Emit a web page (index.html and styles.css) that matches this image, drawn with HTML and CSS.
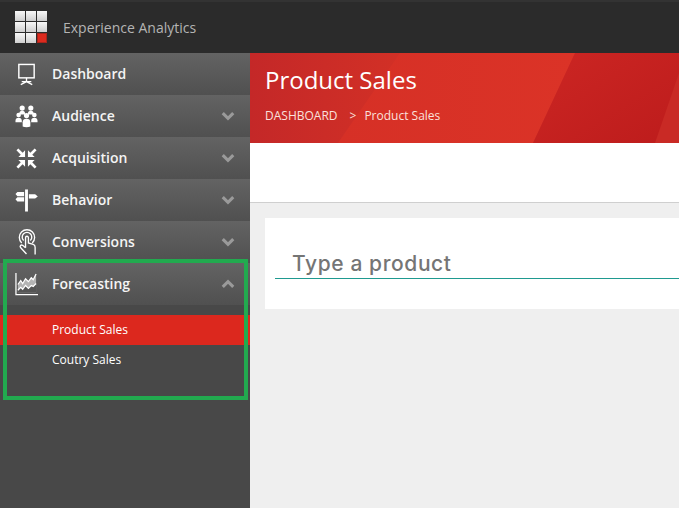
FILE: index.html
```html
<!DOCTYPE html>
<html>
<head>
    <title>Experience Analytics</title>
    <link rel="stylesheet" href="styles.css">
</head>
<body>
    <header class="topbar">
        <div class="logo">
            <span></span><span></span><span></span>
            <span></span><span></span><span></span>
            <span></span><span></span><span class="logo-red"></span>
        </div>
        <div class="app-name">Experience Analytics</div>
    </header>

    <div class="layout">
        <nav class="sidebar">
            <a class="menu-item">
                <svg class="menu-icon" viewBox="0 0 24 24">
                    <rect x="4" y="1.500" width="16" height="14" fill="none" stroke="#fff" stroke-width="1.500"/>
                    <path d="M12 15.500v4M12 19.500l-6 3M12 19.500l6 3M7 19.500h10" fill="none" stroke="#fff" stroke-width="1.400"/>
                </svg>
                <span class="menu-label">Dashboard</span>
            </a>
            <a class="menu-item">
                <svg class="menu-icon" viewBox="0 0 24 24" fill="#fff">
                    <circle cx="7.500" cy="3.200" r="2.700"/><circle cx="16.500" cy="3.200" r="2.700"/>
                    <path d="M4.500 9c0-2 1-3 3-3s3 1 3 3v1h-6zM13.500 9c0-2 1-3 3-3s3 1 3 3v1h-6z"/>
                    <circle cx="3.800" cy="10.500" r="2.400"/><circle cx="20.200" cy="10.500" r="2.400"/><circle cx="12" cy="11" r="2.700"/>
                    <path d="M0.500 16.500c0-2 1.200-3.200 3.300-3.200s3.300 1.200 3.300 3.200v1.500H0.500zM16.900 16.500c0-2 1.200-3.200 3.300-3.200s3.300 1.200 3.300 3.200v1.500h-6.600z"/>
                    <path d="M8 18c0-2.500 1.500-3.700 4-3.700s4 1.200 4 3.700v4.500c-2 1-6 1-8 0z"/>
                </svg>
                <span class="menu-label">Audience</span>
                <svg class="chevron" viewBox="0 0 12 8"><path d="M1.500 1.500 6 6l4.500-4.500" fill="none" stroke="#9a9a9a" stroke-width="2.600"/></svg>
            </a>
            <a class="menu-item">
                <svg class="menu-icon" viewBox="0 0 24 24" fill="#fff">
                    <path d="M3.500 1.500 1.500 3.500l4.500 4.500-2.500 2.500h7v-7L8 6z"/>
                    <path d="M20.500 1.500l2 2-4.500 4.500 2.500 2.500h-7v-7L16 6z"/>
                    <path d="M3.500 22.500l-2-2L6 16l-2.500-2.500h7v7L8 18z"/>
                    <path d="M20.500 22.500l2-2L18 16l2.500-2.500h-7v7L16 18z"/>
                </svg>
                <span class="menu-label">Acquisition</span>
                <svg class="chevron" viewBox="0 0 12 8"><path d="M1.500 1.500 6 6l4.500-4.500" fill="none" stroke="#9a9a9a" stroke-width="2.600"/></svg>
            </a>
            <a class="menu-item">
                <svg class="menu-icon" viewBox="0 0 24 24" fill="#fff">
                    <path d="M10.500 0.500h3v23h-3z"/>
                    <path d="M2.500 3H9.500v4.500H2.500L0.500 5.200zM2.500 8.500H9.500v4.500H2.500L0.500 10.700zM14.500 5.500H21l2.800 2.300-2.800 2.200h-6.500z"/>
                </svg>
                <span class="menu-label">Behavior</span>
                <svg class="chevron" viewBox="0 0 12 8"><path d="M1.500 1.500 6 6l4.500-4.500" fill="none" stroke="#9a9a9a" stroke-width="2.600"/></svg>
            </a>
            <a class="menu-item">
                <svg class="menu-icon icon-tall" viewBox="0 0 24 28" fill="none" stroke="#fff" stroke-width="1.400">
                    <path d="M7 15a8 8 0 1 1 11 0"/>
                    <path d="M9 12.500a5 5 0 1 1 7 0"/>
                    <path d="M11 20V9.500a1.500 1.500 0 0 1 3 0V15l5 1.500c1.500.5 2 1.500 2 3V27"/>
                    <path d="M11 20l-3-2.500c-2-1-3.500 1-2 2.500l6 6.500"/>
                </svg>
                <span class="menu-label">Conversions</span>
                <svg class="chevron" viewBox="0 0 12 8"><path d="M1.500 1.500 6 6l4.500-4.500" fill="none" stroke="#9a9a9a" stroke-width="2.600"/></svg>
            </a>
            <a class="menu-item">
                <svg class="menu-icon" viewBox="0 0 24 24">
                    <path d="M1 0v22.500h23" fill="none" stroke="#fff" stroke-width="1.300"/>
                    <path d="M3 12l3-4 2 3 3-5 3 3 3-4 2 2 3-6v19H3z" fill="#fff" fill-opacity=".55"/>
                    <path d="M3 18l3-3 2 2 3-4 3 3 3-3 2 1 3-3v9H3z" fill="#555"/>
                    <path d="M3 12l3-4 2 3 3-5 3 3 3-4 2 2 3-6M3 18l3-3 2 2 3-4 3 3 3-3 2 1 3-3" fill="none" stroke="#fff" stroke-width="1.300"/>
                </svg>
                <span class="menu-label">Forecasting</span>
                <svg class="chevron" viewBox="0 0 12 8"><path d="M1.500 6.500 6 2l4.500 4.500" fill="none" stroke="#9a9a9a" stroke-width="2.600"/></svg>
            </a>
            <div class="submenu">
                <a class="submenu-item active">Product Sales</a>
                <a class="submenu-item">Coutry Sales</a>
            </div>
            <div class="highlight-box"></div>
        </nav>

        <main class="content">
            <section class="page-header">
                <svg class="header-shapes" viewBox="0 0 429 90" preserveAspectRatio="none">
                    <defs>
                        <linearGradient id="midFill" x1="0" y1="0" x2="1" y2="0">
                            <stop offset="0" stop-color="#d63026"/>
                            <stop offset="1" stop-color="#db3327"/>
                        </linearGradient>
                        <linearGradient id="rightFill" x1="0" y1="0" x2="1" y2="1">
                            <stop offset="0" stop-color="#cc2623"/>
                            <stop offset="1" stop-color="#bd1c1c"/>
                        </linearGradient>
                    </defs>
                    <polygon points="150,0 325,0 283,90 88,90" fill="url(#midFill)"/>
                    <polygon points="325,0 429,0 429,90 283,90" fill="url(#rightFill)"/>
                    <polygon points="429,20 429,90 405,90" fill="#c92a25"/>
                </svg>
                <h1 class="page-title">Product Sales</h1>
                <div class="breadcrumb">
                    <span>DASHBOARD</span>
                    <span class="breadcrumb-sep">&gt;</span>
                    <span>Product Sales</span>
                </div>
            </section>
            <div class="toolbar"></div>
            <section class="work-area">
                <div class="card">
                    <div class="product-input">Type a product</div>
                </div>
            </section>
        </main>
    </div>
</body>
</html>
```

FILE: styles.css
```css
* {
    box-sizing: border-box;
}

html,
body {
    height: 100%;
}

body {
    margin: 0;
    overflow: hidden;
    font-family: 'Open Sans', sans-serif;
    background-color: #efefef;
    display: flex;
    flex-direction: column;
}

.topbar {
    height: 53px;
    flex-shrink: 0;
    display: flex;
    align-items: center;
    padding-left: 15px;
    background-color: #2b2b2b;
    border-top: 2px solid #333;
}

.logo {
    display: grid;
    grid-template-columns: repeat(3, 10px);
    grid-template-rows: repeat(3, 10px);
    gap: 1px;
    width: 32px;
    height: 32px;
    margin-top: -2px;
}

.logo span {
    background: linear-gradient(#f8f8f8, #cfcfcf);
}

.logo .logo-red {
    background: #dc2a1e;
    box-shadow: inset 0 0 0 1px #a8251c;
}

.app-name {
    margin-left: 16px;
    font-size: 14px;
    color: #b4b4b4;
}

.layout {
    flex: 1;
    display: flex;
    min-height: 0;
}

.sidebar {
    position: relative;
    width: 250px;
    flex-shrink: 0;
    background-color: #484848;
}

.menu-item {
    height: 42px;
    display: flex;
    align-items: center;
    padding: 0 14px 0 15px;
    background: linear-gradient(#636363, #505050);
    color: #fff;
}

.menu-icon {
    width: 23px;
    height: 23px;
    flex-shrink: 0;
}

.icon-tall {
    height: 28px;
}

.menu-label {
    margin-left: 14px;
    margin-top: -2px;
    flex: 1;
    font-size: 14px;
    font-weight: 600;
    color: #f4f4f4;
}

.chevron {
    width: 14px;
    height: 10px;
    margin-right: 1px;
}

.submenu {
    padding-top: 10px;
}

.submenu-item {
    display: block;
    height: 30px;
    line-height: 29px;
    padding-left: 52px;
    font-size: 12px;
    color: #fff;
}

.submenu-item.active {
    background-color: #dc281e;
}

/* annotation drawn on top of the menu */
.highlight-box {
    position: absolute;
    left: 3px;
    top: 206px;
    width: 245px;
    height: 141px;
    border: 4px solid #22aa4f;
}

.content {
    flex: 1;
    min-width: 0;
    display: flex;
    flex-direction: column;
}

.page-header {
    position: relative;
    height: 90px;
    padding: 10px 15px 0;
    background: linear-gradient(90deg, #c42828, #d23026 150px);
    color: #fff;
}

.header-shapes {
    position: absolute;
    left: 0;
    top: 0;
    width: 100%;
    height: 100%;
}

.page-title {
    position: relative;
    margin: 0;
    font-size: 24px;
    font-weight: 400;
    line-height: 33px;
}

.breadcrumb {
    position: relative;
    margin-top: 11px;
    display: flex;
    font-size: 12px;
    line-height: 17px;
    color: #fbe0dc;
}

.breadcrumb-sep {
    margin: 0 8px 0 12px;
}

.toolbar {
    height: 60px;
    flex-shrink: 0;
    background-color: #fff;
    border-bottom: 1px solid #cfcfcf;
}

.work-area {
    flex: 1;
    padding: 15px 0 0 15px;
}

.card {
    height: 91px;
    padding: 31px 0 0 10px;
    background-color: #fff;
}

.product-input {
    height: 30px;
    padding-left: 17px;
    border-bottom: 1px solid #1f9a90;
    font-family: 'Inter', sans-serif;
    font-size: 21px;
    font-weight: 500;
    letter-spacing: .6px;
    line-height: 30px;
    color: #757575;
}
```
